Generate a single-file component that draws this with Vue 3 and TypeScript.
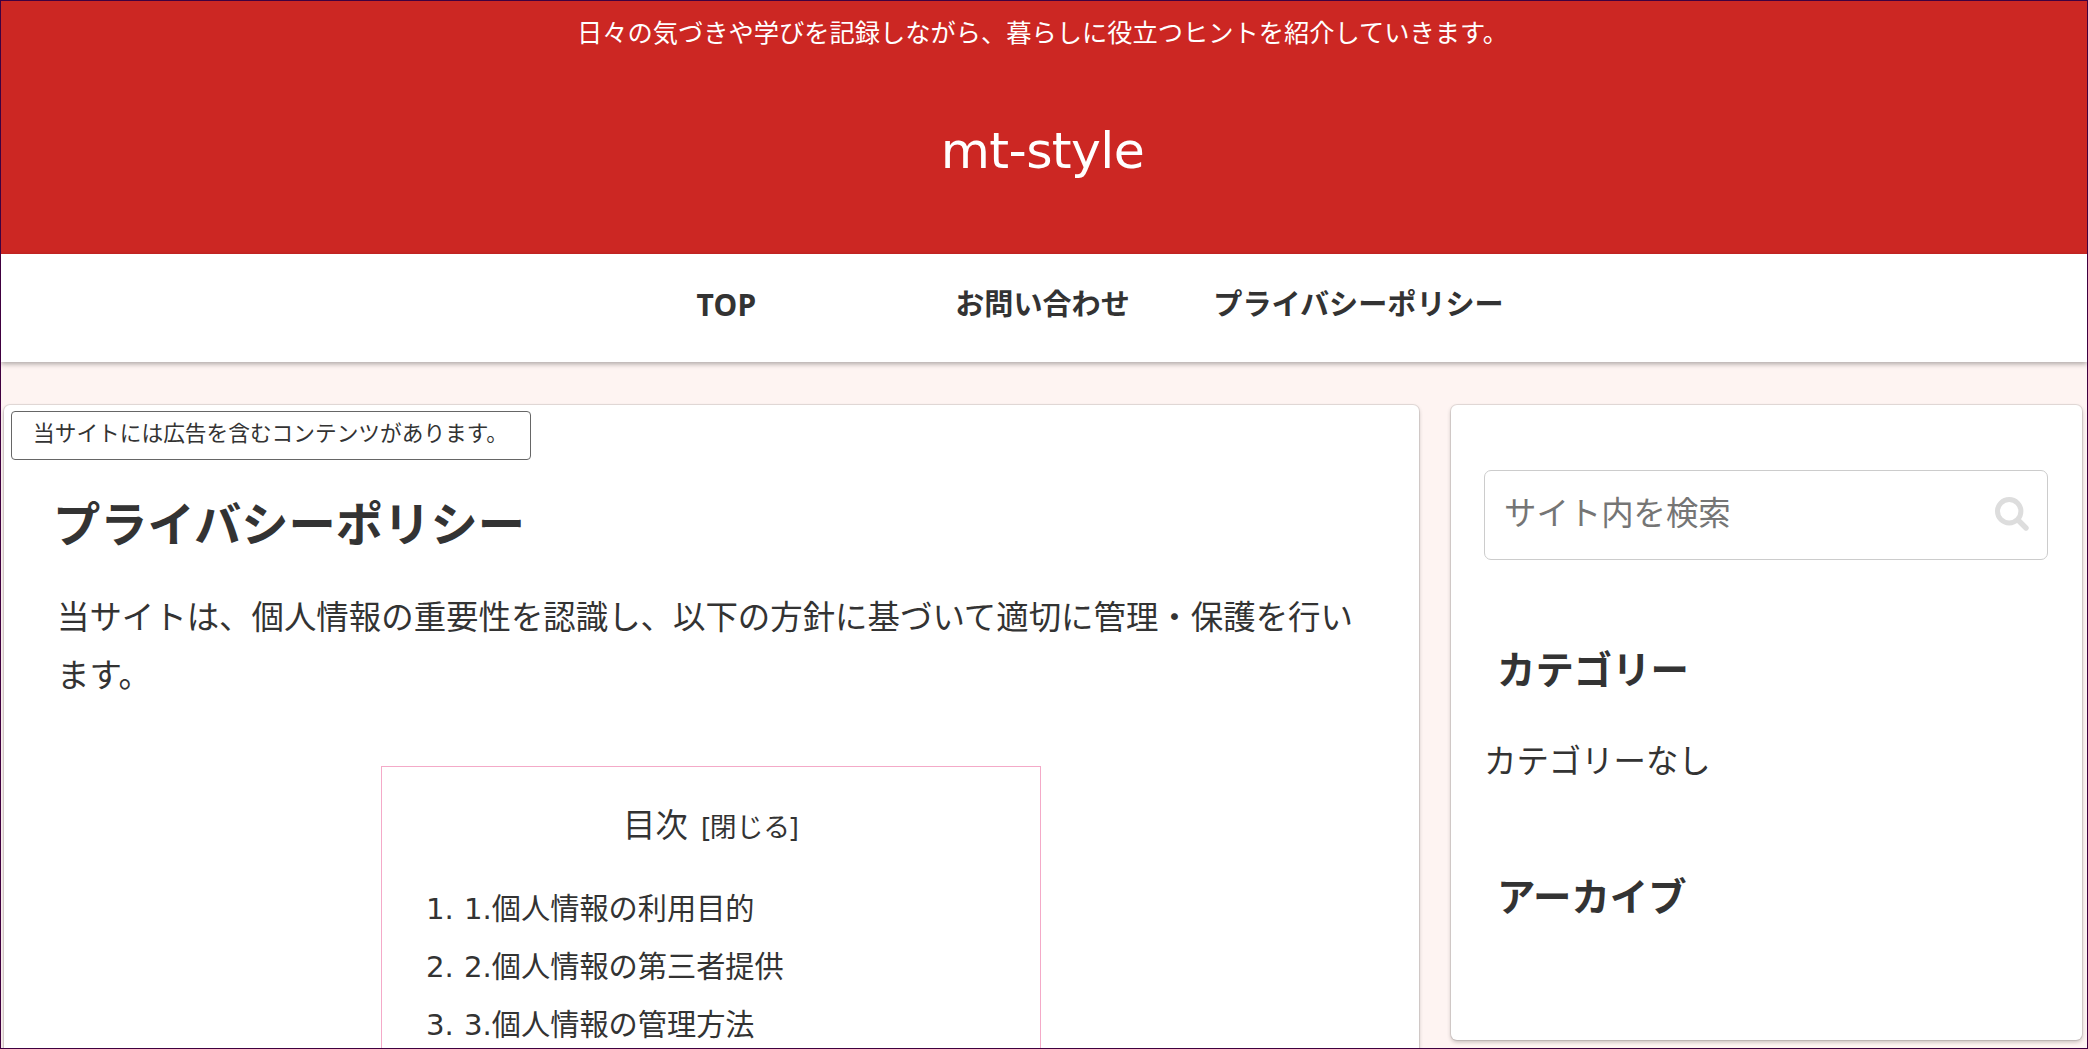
<script setup lang="ts">
const menu: string[] = ['TOP', 'お問い合わせ', 'プライバシーポリシー']
const toc: string[] = ['1.個人情報の利用目的', '2.個人情報の第三者提供', '3.個人情報の管理方法']
</script>

<template>
  <div class="page">
    <header class="header">
      <p class="tagline">日々の気づきや学びを記録しながら、暮らしに役立つヒントを紹介していきます。</p>
      <div class="site-name">mt-style</div>
    </header>
    <nav class="nav">
      <a v-for="item in menu" :key="item" class="nav-item">{{ item }}</a>
    </nav>
    <div class="content">
      <main class="card main">
        <div class="notice">当サイトには広告を含むコンテンツがあります。</div>
        <h1 class="title">プライバシーポリシー</h1>
        <p class="lead">当サイトは、個人情報の重要性を認識し、以下の方針に基づいて適切に管理・保護を行います。</p>
        <section class="toc">
          <div class="toc-title"><span>目次</span><span class="toc-toggle">[閉じる]</span></div>
          <ol class="toc-list">
            <li v-for="(item, i) in toc" :key="item"><span class="num">{{ i + 1 }}.</span><a>{{ item }}</a></li>
          </ol>
        </section>
      </main>
      <aside class="card side">
        <div class="search">
          <span>サイト内を検索</span>
          <svg class="icon" viewBox="0 0 34 34" fill="none" stroke="#ddd" stroke-linecap="round">
            <circle cx="14.2" cy="14.2" r="11.7" stroke-width="5" />
            <path d="M23.5 23.5 L31 31" stroke-width="5.4" />
          </svg>
        </div>
        <h3 class="side-title">カテゴリー</h3>
        <p class="side-text">カテゴリーなし</p>
        <h3 class="side-title second">アーカイブ</h3>
      </aside>
    </div>
  </div>
</template>

<style>
body {
  margin: 0;
  overflow: hidden;
}
</style>

<style scoped>
* {
  box-sizing: border-box;
}
.page {
  width: 2088px;
  height: 1049px;
  overflow: hidden;
  border: 1px solid #400040;
  background: #fef4f2;
  color: #333;
  font-family: "Noto Sans", "Noto Sans CJK JP", sans-serif;
  font-size: 32.4px;
  line-height: 58.3px;
}
p, h1, h3, ol {
  margin: 0;
  padding: 0;
}
.header {
  height: 253px;
  background: #cc2723;
  color: #fff;
  text-align: center;
  padding-right: 3px;
}
.tagline {
  padding-top: 9px;
  font-size: 25.25px;
  line-height: 45px;
}
.site-name {
  margin-top: 56px;
  font-family: "DejaVu Sans", sans-serif;
  font-size: 50.5px;
  line-height: 80px;
  letter-spacing: -0.6px;
}
.nav {
  height: 108px;
  display: flex;
  justify-content: center;
  padding-right: 3px;
  background: #fff;
  box-shadow: 0 2px 5px rgba(0, 0, 0, 0.32);
}
.nav-item {
  width: 316px;
  text-align: center;
  font-size: 29.1px;
  font-weight: 700;
  line-height: 101px;
  white-space: nowrap;
}
.nav-item:first-child {
  font-size: 30px;
  letter-spacing: 0.3px;
}
.content {
  display: flex;
  align-items: flex-start;
  gap: 32px;
  padding: 43px 0 0 3px;
}
.card {
  background: #fff;
  border-radius: 6px;
  box-shadow: 0 0 0 1px rgba(0, 0, 0, 0.09), 0 2px 4px rgba(0, 0, 0, 0.24);
}
.main {
  width: 1415px;
  height: 700px;
  padding: 6px 49px 0 53px;
}
.notice {
  width: 520px;
  height: 49px;
  margin-left: -46px;
  padding-left: 21px;
  border: 1px solid #666;
  border-radius: 4px;
  font-size: 21.7px;
  line-height: 41px;
  white-space: nowrap;
}
.title {
  margin: 24px 0 0 -4px;
  font-size: 47.3px;
  line-height: 80px;
}
.lead {
  margin-top: 24px;
  font-size: 32.43px;
}
.toc {
  width: 660px;
  height: 400px;
  margin: 61px 0 0 324px;
  padding: 28px 44px 0;
  border: 1px solid #f4aac8;
}
.toc-title {
  display: flex;
  justify-content: center;
  align-items: baseline;
  gap: 13px;
}
.toc-toggle {
  font-size: 26.8px;
}
.toc-list {
  margin-top: 24px;
  list-style: none;
  font-family: "DejaVu Sans", "Noto Sans CJK JP", sans-serif;
  font-size: 29.2px;
}
.toc-list li {
  display: flex;
}
.num {
  width: 38px;
}
.side {
  width: 631px;
  height: 635px;
  padding: 65px 34px 0 33px;
}
.search {
  display: flex;
  justify-content: space-between;
  height: 90px;
  padding: 12px 18px 0 19px;
  border: 1px solid #ccc;
  border-radius: 7px;
  color: #757575;
}
.icon {
  width: 34px;
  height: 34px;
  margin-top: 14px;
}
.side-title {
  margin-top: 79px;
  padding-left: 13px;
  font-size: 38.4px;
  line-height: 60px;
}
.side-text {
  margin-top: 32px;
}
.side-title.second {
  margin-top: 77px;
}
</style>
